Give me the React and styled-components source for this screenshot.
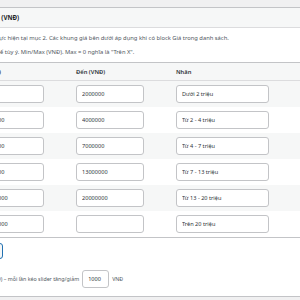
import React from "react";
import styled, {createGlobalStyle} from "styled-components";

const GlobalStyle = createGlobalStyle`
    html, body {
        margin: 0;
        padding: 0;
        background: #f0f0f1;
        overflow: hidden;
    }
    body {
        font-family: "Noto Sans", "Liberation Sans", sans-serif;
        color: #50575e;
    }
`;

const Page = styled.div`
    width: 300px;
    height: 300px;
    overflow: hidden;
    padding-top: 7px;
    box-sizing: border-box;
`;

const Postbox = styled.div`
    margin-left: -48px;
    width: 430px;
    background: #fff;
    border: 1px solid #c3c4c7;
`;

const PostboxHeader = styled.div`
    height: 19px;
    display: flex;
    align-items: center;
    padding: 0 12px;
    background: #f6f7f7;
    border-bottom: 1px solid #dcdcde;
`;

const Title = styled.h2`
    margin: 0;
    font-size: 6.2px;
    font-weight: 700;
    color: #1d2327;
    white-space: nowrap;
`;

const Inside = styled.div`
    padding: 6px 12px 8px;
`;

const Desc = styled.p`
    margin: 0 0 5.6px;
    font-size: 5.8px;
    line-height: 8.4px;
    white-space: nowrap;
`;

const PriceTable = styled.table`
    width: 100%;
    border-collapse: collapse;
    border: 1px solid #c3c4c7;
    table-layout: fixed;
    font-size: 5.8px;
`;

const HeadCell = styled.th`
    width: ${props => props.$width || "auto"};
    text-align: left;
    font-weight: 600;
    color: #2c3338;
    height: 17px;
    padding: 0 10px;
    background: #f6f7f7;
    border-bottom: 1px solid #dcdcde;
`;

const Row = styled.tr`
    background: ${props => props.$odd ? "#f6f7f7" : "#fff"};
`;

const Cell = styled.td`
    padding: 4px 10px;
    vertical-align: middle;
`;

const Field = styled.input`
    box-sizing: border-box;
    width: ${props => props.$width || "68px"};
    height: 18px;
    padding: 0 5px;
    font-family: inherit;
    font-size: 5.6px;
    color: #2c3338;
    background: #fff;
    border: 1px solid #c3c4c7;
    border-radius: 3px;
    outline: none;
    display: block;
`;

const AddButton = styled.button`
    margin-top: 5px;
    height: 16px;
    padding: 0 8px;
    font-family: inherit;
    font-size: 5.8px;
    color: #2271b1;
    background: #f6f7f7;
    border: 1px solid #2271b1;
    border-radius: 3px;
    display: block;
`;

const StepRow = styled.div`
    margin-top: 11px;
    display: flex;
    align-items: center;
    gap: 3px;
    font-size: 5.3px;
    white-space: nowrap;
`;

const rows = [
    {from: "0", to: "2000000", label: "Dưới 2 triệu"},
    {from: "2000000", to: "4000000", label: "Từ 2 - 4 triệu"},
    {from: "4000000", to: "7000000", label: "Từ 4 - 7 triệu"},
    {from: "7000000", to: "13000000", label: "Từ 7 - 13 triệu"},
    {from: "13000000", to: "20000000", label: "Từ 13 - 20 triệu"},
    {from: "20000000", to: "", label: "Trên 20 triệu"},
];

const App = () => {
    return (
        <Page>
            <GlobalStyle/>
            <Postbox>
                <PostboxHeader>
                    <Title>Khoảng giá (VNĐ)</Title>
                </PostboxHeader>
                <Inside>
                    <Desc>Bật/tắt đã thực hiện tại mục 2. Các khung giá bên dưới áp dụng khi có block Giá trong danh sách.</Desc>
                    <Desc>Ô nhãn có thể tùy ý. Min/Max (VNĐ). Max = 0 nghĩa là "Trên X".</Desc>
                    <PriceTable>
                        <thead>
                        <tr>
                            <HeadCell $width="80px">Từ (VNĐ)</HeadCell>
                            <HeadCell $width="80px">Đến (VNĐ)</HeadCell>
                            <HeadCell>Nhãn</HeadCell>
                        </tr>
                        </thead>
                        <tbody>
                        {rows.map((r, i) => (
                            <Row key={i} $odd={i % 2 === 0}>
                                <Cell><Field defaultValue={r.from}/></Cell>
                                <Cell><Field defaultValue={r.to}/></Cell>
                                <Cell><Field $width="93px" defaultValue={r.label}/></Cell>
                            </Row>
                        ))}
                        </tbody>
                    </PriceTable>
                    <AddButton type="button">+ Thêm</AddButton>
                    <StepRow>
                        Bước giá (VNĐ) – mỗi lần kéo slider tăng/giảm
                        <Field $width="27px" defaultValue="1000"/>
                        VNĐ
                    </StepRow>
                </Inside>
            </Postbox>
        </Page>
    );
}

export default App;
